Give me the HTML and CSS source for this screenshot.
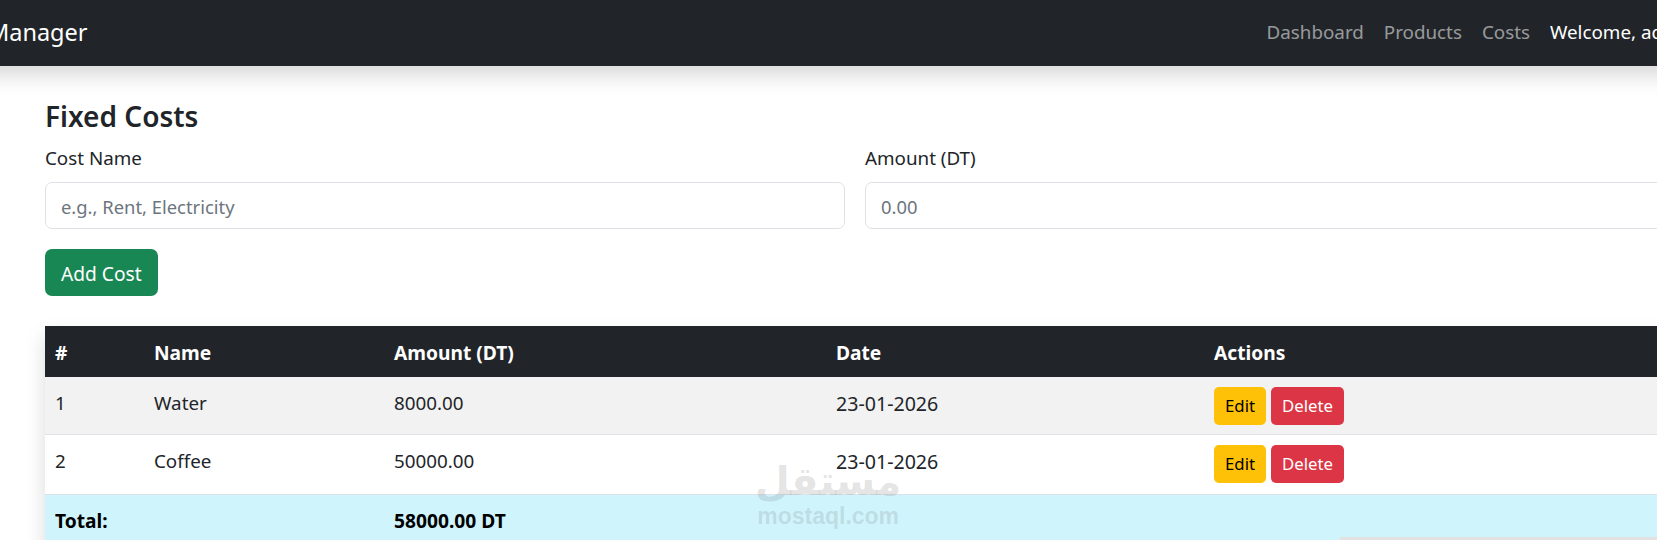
FILE: index.html
```html
<!DOCTYPE html>
<html lang="en">
<head>
<meta charset="UTF-8">
<meta name="viewport" content="width=device-width, initial-scale=1.0">
<title>Fixed Costs</title>
<link rel="stylesheet" href="styles.css">
</head>
<body>
<div class="page">
    <nav class="navbar">
        <a class="brand" href="#">Cost Manager</a>
        <ul class="nav-links">
            <li><a href="#">Dashboard</a></li>
            <li><a href="#">Products</a></li>
            <li><a href="#">Costs</a></li>
            <li class="welcome">Welcome, admin</li>
        </ul>
    </nav>

    <main class="container">
        <h3>Fixed Costs</h3>
        <form class="cost-form">
            <div class="form-row">
                <div class="field">
                    <label for="costName">Cost Name</label>
                    <input type="text" id="costName" placeholder="e.g., Rent, Electricity">
                </div>
                <div class="field">
                    <label for="amount">Amount (DT)</label>
                    <input type="text" id="amount" placeholder="0.00">
                </div>
            </div>
            <button type="submit" class="btn btn-add">Add Cost</button>
        </form>

        <table class="costs">
            <colgroup>
                <col class="col-id">
                <col class="col-name">
                <col class="col-amount">
                <col class="col-date">
                <col class="col-actions">
            </colgroup>
            <thead>
                <tr><th>#</th><th>Name</th><th>Amount (DT)</th><th>Date</th><th>Actions</th></tr>
            </thead>
            <tbody>
                <tr class="striped">
                    <td>1</td><td>Water</td><td>8000.00</td><td class="date">23-01-2026</td>
                    <td class="actions"><div class="action-btns"><a class="btn-sm btn-edit" href="#">Edit</a><a class="btn-sm btn-delete" href="#">Delete</a></div></td>
                </tr>
                <tr class="plain">
                    <td>2</td><td>Coffee</td><td>50000.00</td><td class="date">23-01-2026</td>
                    <td class="actions"><div class="action-btns"><a class="btn-sm btn-edit" href="#">Edit</a><a class="btn-sm btn-delete" href="#">Delete</a></div></td>
                </tr>
                <tr class="total">
                    <td colspan="2">Total:</td><td>58000.00 DT</td><td></td><td></td>
                </tr>
            </tbody>
        </table>
    </main>
</div>

<div class="watermark">
    <span class="wm-ar" lang="ar" dir="rtl">مستقل</span>
    <span class="wm-en">mostaql.com</span>
</div>
<div class="corner-strip"></div>
</body>
</html>
```

FILE: styles.css
```css
html, body {
    margin: 0;
    height: 540px;
    overflow: hidden;
    background-color: white;
}
body {
    font-family: "Noto Sans", "Open Sans", sans-serif;
    font-size: 18.8px;
    color: #212529;
}
a {
    text-decoration: none;
}
.page {
    width: 1777px;
    margin-left: -60px;
}

/* navbar */
.navbar {
    display: flex;
    align-items: center;
    height: 66px;
    padding: 0 20px 2px;
    box-sizing: border-box;
    background-color: #212529;
    box-shadow: 0 10px 19px rgba(0, 0, 0, 0.15);
}
.brand {
    color: white;
    font-size: 23.5px;
    margin-left: -27px;
}
.nav-links {
    display: flex;
    align-items: center;
    gap: 20px;
    margin: 0 0 0 auto;
    padding: 0;
    list-style: none;
}
.nav-links a {
    color: rgba(255, 255, 255, 0.55);
}
.welcome {
    color: white;
}

/* page body */
.container {
    padding: 33px 0 0 105px;
}
h3 {
    margin: 0 0 13px;
    font-size: 28px;
    font-weight: 600;
    line-height: 34px;
}
.form-row {
    display: flex;
    gap: 20px;
}
.field {
    width: 800px;
}
label {
    display: block;
    margin-bottom: 11px;
    line-height: 25px;
}
input {
    display: block;
    width: 100%;
    height: 47px;
    box-sizing: border-box;
    padding: 1px 15px 0;
    border: 1px solid #dee2e6;
    border-radius: 7px;
    font: inherit;
    font-size: 18.4px;
}
input::placeholder {
    color: #6c757d;
}
.btn {
    display: block;
    height: 47px;
    margin-top: 20px;
    padding: 1px 16px 0;
    border: none;
    border-radius: 7px;
    font: inherit;
    font-size: 19.2px;
    color: white;
    background-color: #198754;
}

/* table */
.costs {
    width: 1640px;
    margin-top: 30px;
    border-collapse: collapse;
    table-layout: fixed;
    box-shadow: 0 10px 19px rgba(0, 0, 0, 0.15);
}
.col-id { width: 99px; }
.col-name { width: 240px; }
.col-amount { width: 442px; }
.col-date { width: 378px; }
.costs th, .costs td {
    padding: 12px 10px 9px;
    text-align: left;
    vertical-align: top;
    line-height: 29px;
}
.costs th {
    padding: 12px 10px 10px;
    color: white;
    background-color: #212529;
    font-size: 19.2px;
    font-weight: 700;
}
.costs td {
    border-bottom: 1px solid #dee2e6;
}
.costs .date {
    font-size: 19.6px;
}
.striped td {
    background-color: #f2f2f2;
}
.costs .total td {
    padding: 11px 10px 40px;
    background-color: #cff4fc;
    color: black;
    font-size: 19.2px;
    font-weight: 700;
    border-bottom: none;
}
.costs .actions {
    padding-top: 10px;
    padding-bottom: 9px;
}
.costs .plain .actions {
    padding-bottom: 11px;
}
.action-btns {
    display: flex;
    gap: 5px;
}
.btn-sm {
    display: block;
    height: 38px;
    line-height: 38px;
    padding: 0 11px;
    border-radius: 5px;
    font-size: 16.8px;
}
.btn-edit {
    color: black;
    background-color: #ffc107;
}
.btn-delete {
    color: white;
    background-color: #dc3545;
}

/* overlays on the screenshot */
.watermark {
    position: absolute;
    left: 755px;
    top: 458px;
    display: flex;
    flex-direction: column;
    align-items: center;
    color: rgba(120, 120, 120, 0.2);
    font-family: "Liberation Sans", sans-serif;
    font-weight: 700;
}
.wm-ar {
    font-family: "DejaVu Sans", sans-serif;
    font-size: 40px;
    line-height: 46px;
}
.wm-en {
    font-size: 23px;
    line-height: 24px;
}
.corner-strip {
    position: absolute;
    left: 1340px;
    right: 0;
    top: 537px;
    height: 3px;
    background-color: #e2e2e2;
}
```
